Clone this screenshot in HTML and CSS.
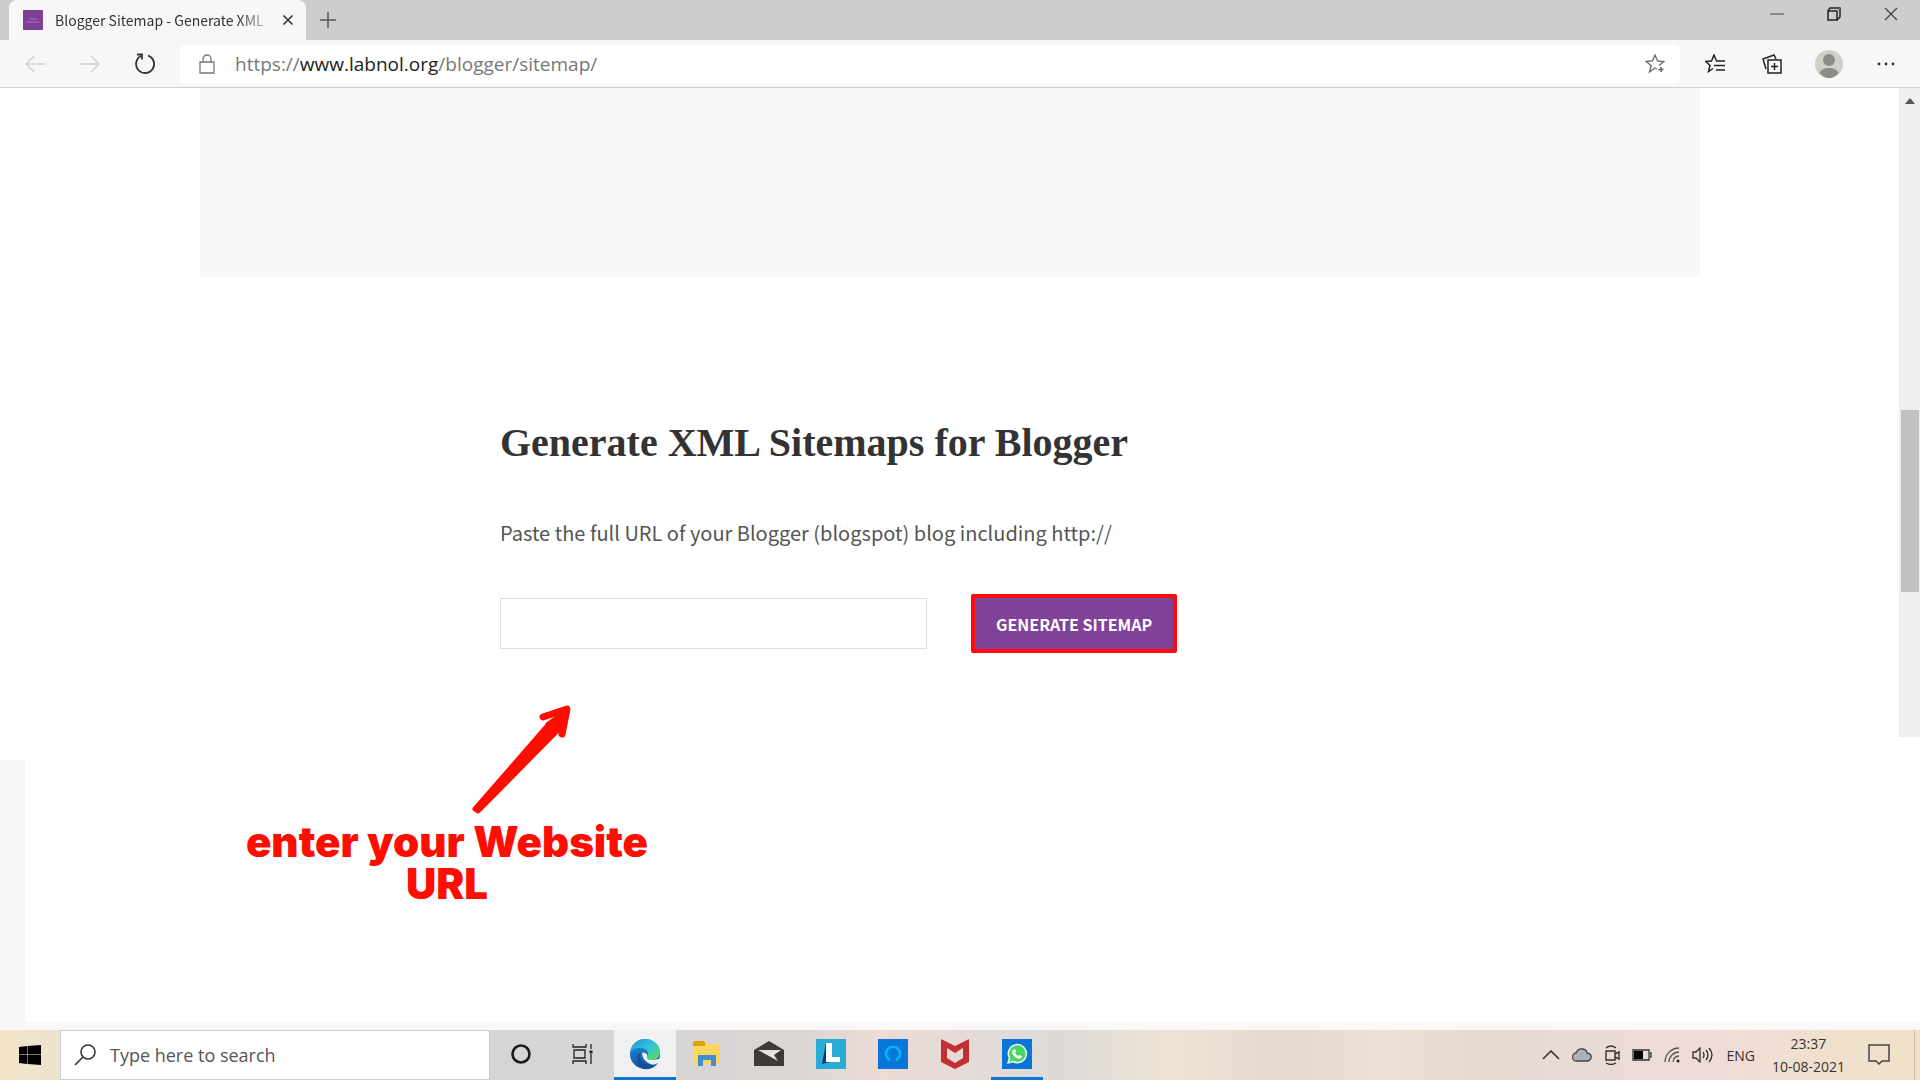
FILE: index.html
```html
<!DOCTYPE html>
<html lang="en">
<head>
    <meta charset="UTF-8">
    <meta name="viewport" content="width=device-width, initial-scale=1.0">
    <title>Blogger Sitemap - Generate XML</title>
    <link rel="stylesheet" href="styles.css">
</head>
<body>
    <header class="tabbar">
        <div class="tab">
            <svg class="favicon" width="20" height="20" viewBox="0 0 20 20"><rect width="20" height="20" fill="#7f3f98"/><path d="M6 9h8M3 12h14" stroke="#a678b8"/></svg>
            <span class="tab-title">Blogger Sitemap - Generate XML</span>
            <button class="icon-btn" aria-label="Close tab">
                <svg width="12" height="12" viewBox="0 0 12 12"><path d="M1.500 1.500l9 9M10.500 1.500l-9 9" stroke="#333" stroke-width="1.600"/></svg>
            </button>
        </div>
        <button class="icon-btn new-tab" aria-label="New tab">
            <svg width="18" height="18" viewBox="0 0 18 18"><path d="M9 1v16M1 9h16" stroke="#555" stroke-width="1.500"/></svg>
        </button>
        <div class="window-controls">
            <button class="icon-btn" aria-label="Minimize">
                <svg width="14" height="14" viewBox="0 0 14 14"><path d="M0 7h14" stroke="#888" stroke-width="2"/></svg>
            </button>
            <button class="icon-btn" aria-label="Restore">
                <svg width="14" height="14" viewBox="0 0 14 14" fill="none" stroke="#222" stroke-width="1.500"><path d="M1 4h9v9H1z"/><path d="M1 4l2-3h10v9l-3 3" /><path d="M10 4l3-3" stroke="#888" stroke-width="1"/></svg>
            </button>
            <button class="icon-btn" aria-label="Close">
                <svg width="14" height="14" viewBox="0 0 14 14"><path d="M1 1l12 12M13 1L1 13" stroke="#444" stroke-width="1.300"/></svg>
            </button>
        </div>
    </header>

    <nav class="toolbar">
        <div class="nav-buttons">
            <button class="icon-btn" aria-label="Back">
                <svg width="20" height="18" viewBox="0 0 20 18" fill="none" stroke="#d0d0d0" stroke-width="1.500"><path d="M20 9H1M9 1L1 9l8 8"/></svg>
            </button>
            <button class="icon-btn" aria-label="Forward">
                <svg width="20" height="18" viewBox="0 0 20 18" fill="none" stroke="#d0d0d0" stroke-width="1.500"><path d="M0 9h19M11 1l8 8-8 8"/></svg>
            </button>
            <button class="icon-btn" aria-label="Refresh">
                <svg width="22" height="22" viewBox="0 0 22 22" fill="none" stroke="#333" stroke-width="1.800"><path d="M14 2.500A9 9 0 1 1 7 3"/><path d="M3 1.500h5v5"/></svg>
            </button>
        </div>
        <div class="address">
            <svg width="16" height="20" viewBox="0 0 16 20" fill="none" stroke="#777" stroke-width="1.300"><path d="M1 8h14v11H1zM4 8V5a4 4 0 0 1 8 0v3"/></svg>
            <a class="url" href="#">https://<span class="host">www.labnol.org</span>/blogger/sitemap/</a>
            <button class="icon-btn" aria-label="Add to favorites">
                <svg width="20" height="20" viewBox="0 0 20 20" fill="none" stroke="#666" stroke-width="1.300"><path d="M12 15l-2-1-5.500 4 1.700-6.500L1 7.500l6.500-.5L10 1l2.500 6 6.500.5-5 4"/><path d="M16 13v5M13.500 15.500h5" stroke-width="1.600"/></svg>
            </button>
        </div>
        <div class="tools">
            <button class="icon-btn" aria-label="Favorites">
                <svg width="20" height="20" viewBox="0 0 20 20" fill="none" stroke="#222" stroke-width="1.500"><path d="M8 14.500l-4.500 3L5 11.500.800 7.500l5.700-.500L9 1l2.300 5.500"/><path d="M11 7h9M9 11.500h11M11 16h9"/></svg>
            </button>
            <button class="icon-btn" aria-label="Collections">
                <svg width="20" height="20" viewBox="0 0 20 20" fill="none" stroke="#222" stroke-width="1.500"><path d="M6 6h13v13H6zM12.500 9v7M9 12.500h7"/><path d="M4 15L1 5l11-4 2 4"/></svg>
            </button>
            <button class="icon-btn" aria-label="Profile">
                <svg width="28" height="28" viewBox="0 0 28 28"><circle cx="14" cy="14" r="14" fill="#d0d0cb"/><circle cx="14" cy="10" r="6" fill="#8b8b87"/><path d="M4.500 23q2-5 9.500-5t9.500 5q-4 5-9.500 5t-9.500-5z" fill="#8b8b87"/></svg>
            </button>
            <button class="icon-btn" aria-label="Settings and more">
                <svg width="18" height="4" viewBox="0 0 18 4" fill="#333"><circle cx="2" cy="2" r="1.400"/><circle cx="9" cy="2" r="1.400"/><circle cx="16" cy="2" r="1.400"/></svg>
            </button>
        </div>
    </nav>

    <div class="viewport">
        <div class="side-strip"></div>
        <main class="page">
            <div class="ad-slot"></div>
            <section class="generator">
                <h1>Generate XML Sitemaps for Blogger</h1>
                <label for="blog-url">Paste the full URL of your Blogger (blogspot) blog including http://</label>
                <form class="form-row">
                    <input type="text" id="blog-url">
                    <button type="button" class="generate">GENERATE SITEMAP</button>
                </form>
            </section>
            <div class="callout">
                <svg class="arrow" width="100" height="112" viewBox="0 0 100 112" fill="none" stroke="#ff0d00" stroke-linecap="round" stroke-linejoin="round">
                    <path d="M4 107L78 22l8 7L7 109z" fill="#ff0d00" stroke-width="5"/>
                    <path d="M72 15l24-8-5 25" stroke-width="7"/>
                    <path d="M76 22l19-14-6 20z" fill="#ff0d00" stroke-width="3"/>
                </svg>
                <p>enter your Website URL</p>
            </div>
        </main>
        <div class="scrollbar">
            <div class="track">
                <svg width="10" height="6" viewBox="0 0 10 6"><path d="M0 6l5-6 5 6z" fill="#555"/></svg>
                <div class="thumb"></div>
            </div>
        </div>
    </div>

    <footer class="taskbar">
        <button class="icon-btn start" aria-label="Start">
            <svg width="22" height="20" viewBox="0 0 22 20"><path d="M0 2l8-1v8.500H0zM8.500 1L22 0v9.500H8.500zM0 10h8v9l-8-1zM8.500 10H22v10l-13.500-1z" fill="#000"/></svg>
        </button>
        <div class="search">
            <svg width="22" height="22" viewBox="0 0 22 22" fill="none" stroke="#333" stroke-width="1.600"><circle cx="14" cy="8" r="7"/><path d="M9 13l-8 8"/></svg>
            <input type="text" placeholder="Type here to search" aria-label="Type here to search">
        </div>
        <div class="apps">
            <button class="app" aria-label="Cortana">
                <svg width="20" height="20" viewBox="0 0 20 20"><circle cx="10" cy="10" r="8.500" fill="none" stroke="#1a1a1a" stroke-width="2.600"/></svg>
            </button>
            <button class="app" aria-label="Task view">
                <svg width="22" height="20" viewBox="0 0 22 20" fill="none" stroke="#222" stroke-width="1.300"><path d="M2 6h11v8H2zM1 0v3h13V0M1 20v-3h13v3M19 0v5M19 10v10"/><path d="M17.500 8h3" stroke-width="3"/></svg>
            </button>
            <button class="app active" aria-label="Microsoft Edge">
                <svg width="32" height="32" viewBox="0 0 32 32">
                    <defs>
                        <linearGradient id="edgeTop" x1="0" y1="0" x2="1" y2="1"><stop offset="0" stop-color="#2196d8"/><stop offset=".5" stop-color="#31c2d8"/><stop offset="1" stop-color="#62e04c"/></linearGradient>
                        <linearGradient id="edgeLow" x1="0" y1="0" x2="0" y2="1"><stop offset="0" stop-color="#1b8fdd"/><stop offset="1" stop-color="#1556a5"/></linearGradient>
                    </defs>
                    <circle cx="16" cy="16" r="15" fill="url(#edgeLow)"/>
                    <path d="M1 15C2 6 9 1 16 1c9 0 15 6 15 13 0 5-4 8-8 8-4 0-6-1-5-3 3-5-1-9-6-9-5 0-9 2-11 5z" fill="url(#edgeTop)"/>
                    <path d="M13 15c3-1 6 1 5 4-1 3 5 4 11 2l3 1-3 5c-3 1-15-1-16-12z" fill="#eef1f2"/>
                    <path d="M12 14c-3 7 2 13 10 13 3 0 5-1 7-2-3 4-8 7-14 6C7 29 5 18 12 14z" fill="#134f9b"/>
                </svg>
            </button>
            <button class="app" aria-label="File Explorer">
                <svg width="28" height="26" viewBox="0 0 28 26"><path d="M1 2q0-2 2-2h9l2 3h13v20H1z" fill="#ffd75e"/><path d="M0 2q0-2 2-2h9q3 4 0 5H0z" fill="#e0a014"/><path d="M5 25V14h18v11h-5v-6h-8v6z" fill="#3d8fd0"/></svg>
            </button>
            <button class="app" aria-label="Mail">
                <svg width="30" height="26" viewBox="0 0 30 26"><path d="M0 9l15-9 15 9v16H0z" fill="#3d3b3a"/><path d="M4 9h23l-7 5 4 6L4 9z" fill="#e6e2e0"/></svg>
            </button>
            <button class="app" aria-label="Lenovo Vantage">
                <svg width="30" height="30" viewBox="0 0 30 30"><path d="M0 0h30v30H0z" fill="#28abd6"/><path d="M10 4L6 25l8-2z" fill="#083b76"/><path d="M10 4h6v14h8v5H10z" fill="#fff"/></svg>
            </button>
            <button class="app" aria-label="Alexa">
                <svg width="30" height="30" viewBox="0 0 30 30"><path d="M0 0h30v30H0z" fill="#0876d6"/><path d="M12 21a7 7 0 1 1 6 0" fill="none" stroke="#08b5f5" stroke-width="2.400"/></svg>
            </button>
            <button class="app" aria-label="McAfee">
                <svg width="28" height="30" viewBox="0 0 28 30"><path d="M0 0l14 7L28 0v23l-14 7-14-7zM6 9v10l8 5 8-5V9l-8 5z" fill="#c12f35" fill-rule="evenodd"/></svg>
            </button>
            <button class="app running" aria-label="WhatsApp">
                <svg width="30" height="30" viewBox="0 0 30 30"><path d="M0 0h30v30H0z" fill="#0876d6"/><path d="M6 24l1.500-5A9 9 0 1 1 11 22.500z" fill="#4dd564" stroke="#e9fbe9" stroke-width="1.500"/><path d="M11 11q2-2 3 1l-1 2q1 2 3 3l2-1q3 1 1 3-3 2-7-2-3-3-1-6z" fill="#fff"/></svg>
            </button>
        </div>
        <div class="tray">
            <svg width="18" height="10" viewBox="0 0 18 10" fill="none" stroke="#333" stroke-width="1.600"><path d="M1 9l8-8 8 8"/></svg>
            <svg width="20" height="14" viewBox="0 0 20 14"><path d="M5 13a4 4 0 0 1-1-8q2-5 7-4 4 1 4 4 5 1 4 5-1 3-4 3z" fill="#aab3b8" stroke="#444" stroke-width="1.300"/></svg>
            <svg width="16" height="20" viewBox="0 0 16 20" fill="none" stroke="#333" stroke-width="1.400"><path d="M2 6h9v9H2zM11 9l4-2v7l-4-2M2 3q5-4 10 0M2 18q5 3 10 0"/></svg>
            <svg width="20" height="12" viewBox="0 0 20 12"><path d="M1 1h16v10H1zM18 4h1v4h-1" fill="none" stroke="#333" stroke-width="1.300"/><path d="M2 2h9v8H2z"/></svg>
            <svg width="16" height="16" viewBox="0 0 16 16" fill="none" stroke="#555" stroke-width="1.300"><path d="M1 15A14 14 0 0 1 15 1M5 15A10 10 0 0 1 15 5M9 15a6 6 0 0 1 6-6"/><circle cx="14" cy="14" r="1.500" fill="#222" stroke="none"/></svg>
            <svg width="22" height="16" viewBox="0 0 22 16" fill="none" stroke="#333" stroke-width="1.300"><path d="M1 5h3l4-4v14l-4-4H1zM11 5q2 3 0 6M14 3q4 5 0 10M17 1q6 7 0 14"/></svg>
            <span class="lang">ENG</span>
            <div class="clock"><span>23:37</span><span>10-08-2021</span></div>
            <button class="icon-btn" aria-label="Notifications">
                <svg width="22" height="22" viewBox="0 0 22 22" fill="none" stroke="#444" stroke-width="1.500"><path d="M1 1h20v16h-7l-3 3-3-3H1z"/></svg>
            </button>
            <div class="show-desktop"></div>
        </div>
    </footer>
</body>
</html>
```

FILE: styles.css
```css
* {
    box-sizing: border-box;
}
body {
    margin: 0;
    min-height: 100vh;
    display: flex;
    flex-direction: column;
    background: #fff;
    font-family: "Open Sans", "Noto Sans", sans-serif;
    color: #333;
}
svg {
    display: block;
    flex: none;
}
button {
    border: none;
    background: none;
    padding: 0;
    cursor: pointer;
}
.icon-btn {
    display: flex;
    align-items: center;
    justify-content: center;
}

/* Browser chrome */
.tabbar {
    display: flex;
    align-items: center;
    height: 40px;
    padding-left: 9px;
    background: #cdcdcd;
}
.tab {
    display: flex;
    align-items: center;
    gap: 12px;
    width: 297px;
    height: 40px;
    padding: 0 12px 0 14px;
    background: #f7f7f7;
    border-radius: 8px 8px 0 0;
}
.tab-title {
    flex: 1;
    white-space: nowrap;
    font-family: "Noto Sans CJK SC", sans-serif;
    font-size: 14px;
    -webkit-mask-image: linear-gradient(to right, #000 85%, rgba(0, 0, 0, 0.2));
    mask-image: linear-gradient(to right, #000 85%, rgba(0, 0, 0, 0.2));
}
.new-tab {
    margin-left: 13px;
}
.window-controls {
    display: flex;
    gap: 43px;
    margin-left: auto;
    padding: 0 22px 12px 0;
}
.toolbar {
    display: flex;
    align-items: center;
    height: 48px;
    padding-right: 20px;
    background: #f7f7f7;
    border-bottom: 1px solid #cfcfcf;
}
.nav-buttons {
    display: flex;
    justify-content: space-between;
    width: 180px;
    padding: 0 24px 0 25px;
}
.address {
    flex: 1;
    display: flex;
    align-items: center;
    gap: 20px;
    height: 38px;
    padding: 0 15px 0 19px;
    background: #fff;
    border-radius: 5px;
}
.url {
    flex: 1;
    font-size: 19px;
    color: #777;
    text-decoration: none;
}
.host {
    color: #222;
}
.tools {
    display: flex;
    align-items: center;
    gap: 29px;
    padding-left: 21px;
}
.tools .icon-btn {
    width: 28px;
}

/* Page area */
.viewport {
    flex: 1;
    display: flex;
    border-bottom: 8px solid #f8f8f8;
}
.side-strip {
    align-self: flex-end;
    width: 25px;
    height: 262px;
    background: #f7f7f7;
}
.page {
    flex: 1;
}
.ad-slot {
    height: 189px;
    margin: 0 199px 0 175px;
    background: #f8f8f8;
}
.generator {
    padding: 142px 0 0 475px;
}
.generator h1 {
    margin: 0;
    font-family: "Liberation Serif", serif;
    font-size: 40px;
    line-height: 48px;
}
.generator label {
    display: block;
    margin-top: 50px;
    font-family: "Noto Sans CJK SC", sans-serif;
    font-size: 20px;
    line-height: 32px;
    color: #555;
}
.form-row {
    display: flex;
    align-items: center;
    gap: 44px;
    margin-top: 45px;
}
.form-row input {
    width: 427px;
    height: 51px;
    padding: 0 12px;
    border: 1px solid #ddd;
    font-size: 20px;
}
.generate {
    height: 59px;
    padding: 0 21px;
    border: 4px solid #ff0a0f;
    border-radius: 2px;
    background: #81429a;
    color: #fff;
    font-family: "Noto Sans CJK SC", sans-serif;
    font-size: 16px;
    font-weight: bold;
}
.callout {
    width: 420px;
    margin: 49px 0 0 212px;
    color: #ff0d00;
    text-align: center;
}
.arrow {
    margin-left: 234px;
}
.callout p {
    margin: 7px 0 0;
    font-family: Inter, sans-serif;
    font-size: 42px;
    font-weight: 900;
    line-height: 42px;
}
.scrollbar {
    width: 21px;
}
.track {
    display: flex;
    flex-direction: column;
    align-items: center;
    height: 649px;
    padding-top: 10px;
    background: #efefef;
}
.thumb {
    width: 18px;
    height: 182px;
    margin-top: 306px;
    background: #c1c1c1;
}

/* Taskbar */
.taskbar {
    display: flex;
    height: 50px;
    background: linear-gradient(to right, #f2e5c8 0, #ece1d2 4%, #d6d5d6 26%, #d9d6d4 41%, #eddbd5 46%, #dcdad8 55%, #efe3d4 61%, #e4d8d0 67%, #ece1d4 72%, #e5d9d1 77%, #efdcd9 89%, #efe2c8 98%);
}
.start {
    width: 60px;
}
.search {
    display: flex;
    align-items: center;
    gap: 14px;
    width: 430px;
    padding-left: 13px;
    background: #fff;
    border: 1px solid #ccc;
}
.search input {
    flex: 1;
    border: none;
    outline: none;
    padding: 0;
    background: none;
    font-family: inherit;
    font-size: 18px;
}
.search input::placeholder {
    color: #555;
}
.apps {
    display: flex;
}
.app {
    display: flex;
    align-items: center;
    justify-content: center;
    width: 62px;
    border-bottom: 3px solid transparent;
}
.active {
    background: #f0f0f0;
    border-color: #0d76d2;
}
.running {
    width: 52px;
    margin: 0 5px;
    border-color: #0d76d2;
}
.tray {
    display: flex;
    align-items: center;
    gap: 12px;
    margin-left: auto;
}
.lang {
    font-size: 14px;
}
.clock {
    display: flex;
    flex-direction: column;
    align-items: center;
    font-size: 14px;
    line-height: 23px;
    margin: 0 11px 0 5px;
}
.show-desktop {
    align-self: stretch;
    width: 6px;
    margin-left: 12px;
    border-left: 1px solid #c9bda4;
}
```
